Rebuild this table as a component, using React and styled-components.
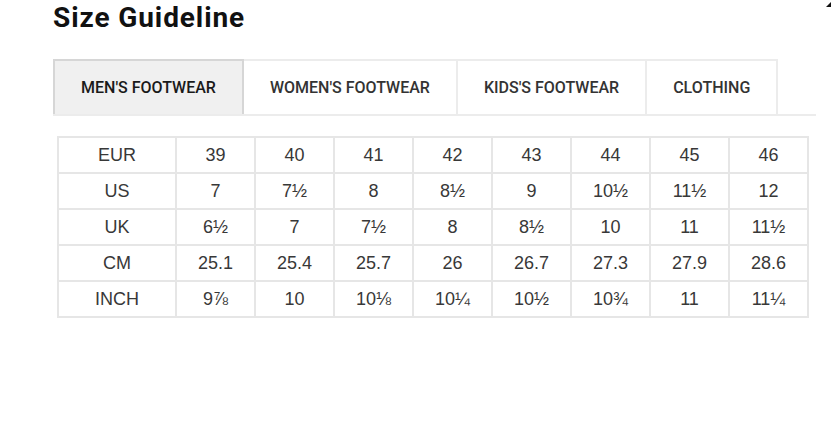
import React, { useState } from "react";
import styled, { createGlobalStyle } from "styled-components";

const Global = createGlobalStyle`
  html, body { margin: 0; padding: 0; background: #fff; }
  body { font-family: Roboto, "Liberation Sans", sans-serif; }
`;

const Page = styled.div`
  position: relative;
  width: 831px;
  height: 432px;
  overflow: hidden;
  padding-left: 53px;
  box-sizing: border-box;
`;

const Title = styled.h1`
  margin: 0;
  padding-top: 2px;
  height: 59px;
  box-sizing: border-box;
  font-family: Roboto, sans-serif;
  font-weight: 700;
  font-size: 28px;
  letter-spacing: 0.9px;
  line-height: 32px;
  color: #111;
`;

const CornerMark = styled.div`
  position: absolute;
  top: 2px;
  right: 0;
  width: 5px;
  height: 5px;
  background: #111;
  clip-path: polygon(0 100%, 100% 0, 100% 100%);
`;

const TabBar = styled.div`
  display: flex;
  width: 763px;
  border-bottom: 2px solid #ececec;
  box-sizing: border-box;
`;

const Tab = styled.button`
  height: 55px;
  padding: 0 26px;
  margin: 0;
  border: 2px solid ${(p) => (p.$active ? "#d6d6d6" : "#ececec")};
  border-bottom: none;
  border-left-width: ${(p) => (p.$first ? 2 : 0)}px;
  background: ${(p) => (p.$active ? "#f0f0f0" : "#fff")};
  font-family: Roboto, sans-serif;
  font-weight: 500;
  font-size: 16px;
  color: ${(p) => (p.$active ? "#1a1a1a" : "#333")};
  cursor: pointer;
  white-space: nowrap;
  box-sizing: border-box;
`;

const TableWrap = styled.div`
  margin-top: 20px;
  margin-left: 4px;
`;

const Table = styled.table`
  border-collapse: collapse;
  border: 2px solid #e6e6e6;
  font-family: "Liberation Sans", Arial, sans-serif;
  font-size: 18px;
  color: #383838;
`;

const Cell = styled.td`
  border: 2px solid #e6e6e6;
  height: 34px;
  padding: 0;
  width: ${(p) => (p.$label ? 116 : 77)}px;
  text-align: center;
  vertical-align: middle;
`;

const tabs = ["MEN'S FOOTWEAR", "WOMEN'S FOOTWEAR", "KIDS'S FOOTWEAR", "CLOTHING"];

const rows = [
  ["EUR", "39", "40", "41", "42", "43", "44", "45", "46"],
  ["US", "7", "7½", "8", "8½", "9", "10½", "11½", "12"],
  ["UK", "6½", "7", "7½", "8", "8½", "10", "11", "11½"],
  ["CM", "25.1", "25.4", "25.7", "26", "26.7", "27.3", "27.9", "28.6"],
  ["INCH", "9⅞", "10", "10⅛", "10¼", "10½", "10¾", "11", "11¼"],
];

export default function App() {
  const [active, setActive] = useState(0);
  return (
    <Page>
      <Global />
      <CornerMark />
      <Title>Size Guideline</Title>
      <TabBar>
        {tabs.map((t, i) => (
          <Tab
            key={t}
            $first={i === 0}
            $active={i === active}
            onClick={() => setActive(i)}
          >
            {t}
          </Tab>
        ))}
      </TabBar>
      <TableWrap>
        <Table>
          <tbody>
            {rows.map((r) => (
              <tr key={r[0]}>
                {r.map((c, j) => (
                  <Cell key={j} $label={j === 0}>
                    {c}
                  </Cell>
                ))}
              </tr>
            ))}
          </tbody>
        </Table>
      </TableWrap>
    </Page>
  );
}
